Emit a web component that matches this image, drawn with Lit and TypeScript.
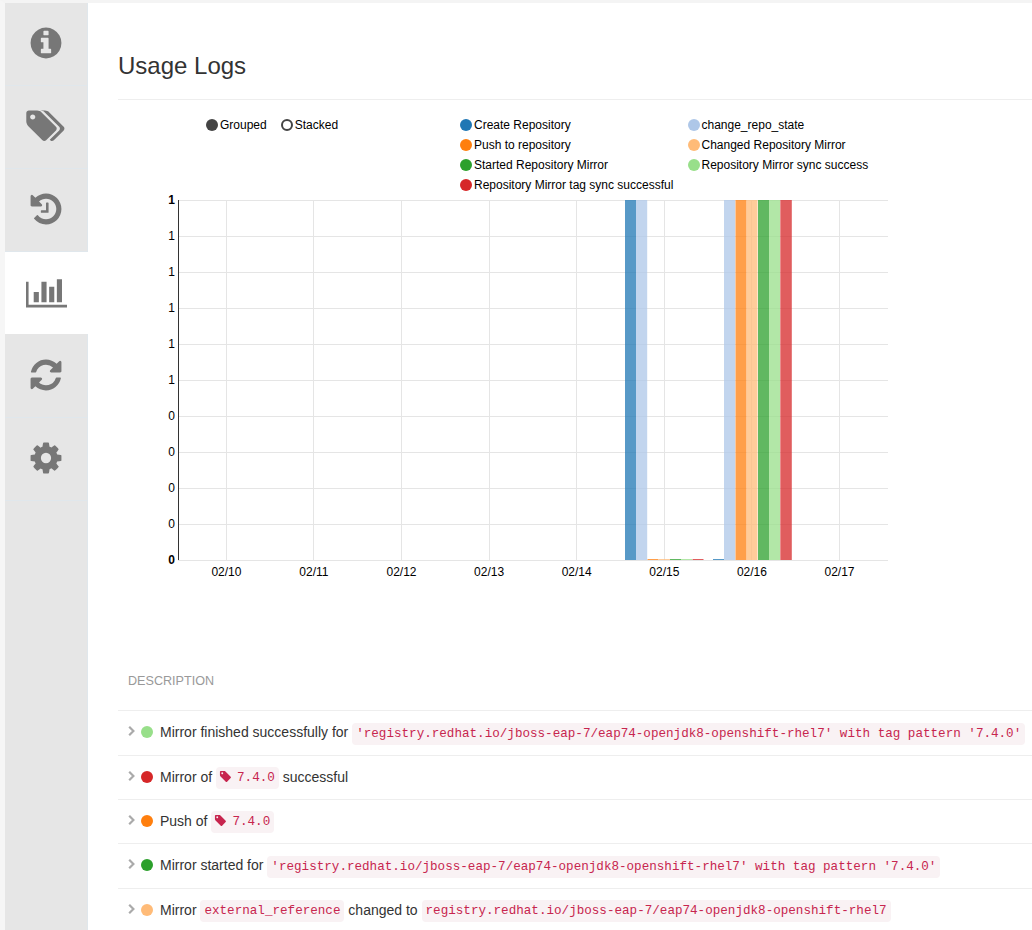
import { LitElement, css, html, svg } from 'lit'
import { customElement } from 'lit/decorators.js'

const ICONS: Record<string, { w: number; d: string }> = {
  info: {
    w: 1792,
    d: 'M1152 1376v-160q0-14-9-23t-23-9h-96v-512q0-14-9-23t-23-9h-320q-14 0-23 9t-9 23v160q0 14 9 23t23 9h96v320h-96q-14 0-23 9t-9 23v160q0 14 9 23t23 9h448q14 0 23-9t9-23zm-128-896v-160q0-14-9-23t-23-9h-192q-14 0-23 9t-9 23v160q0 14 9 23t23 9h192q14 0 23-9t9-23zm640 416q0 209-103 385.5t-279.5 279.5-385.5 103-385.5-103-279.5-279.5-103-385.5 103-385.5 279.5-279.5 385.5-103 385.5 103 279.5 279.5 103 385.5z',
  },
  tags: {
    w: 2048,
    d: 'M512 448q0-53-37.5-90.5t-90.5-37.5-90.5 37.5-37.5 90.5 37.5 90.5 90.5 37.5 90.5-37.5 37.5-90.5zm1067 576q0 53-37 90l-491 492q-39 37-91 37-53 0-90-37l-715-716q-38-37-64.5-101t-26.5-117v-416q0-52 38-90t90-38h416q53 0 117 26.5t102 64.5l715 714q37 39 37 91zm384 0q0 53-37 90l-491 492q-39 37-91 37-36 0-59-14t-53-45l470-470q37-37 37-90 0-52-37-91l-715-714q-38-38-102-64.5t-117-26.5h224q53 0 117 26.5t102 64.5l715 714q37 39 37 91z',
  },
  history: {
    w: 1792,
    d: 'M1664 896q0 156-61 298t-164 245-245 164-298 61q-172 0-327-72.5t-264-204.5q-7-10-6.5-22.5t8.5-20.5l137-138q10-9 25-9 16 2 23 12 73 95 179 147t225 52q104 0 198.5-40.5t163.5-109.5 109.5-163.5 40.5-198.5-40.5-198.5-109.5-163.5-163.5-109.5-198.5-40.5q-98 0-188 35.5t-160 101.5l137 138q31 30 14 69-17 40-59 40h-448q-26 0-45-19t-19-45v-448q0-42 40-59 39-17 69 14l130 129q107-101 244.5-156.5t284.5-55.5q156 0 298 61t245 164 164 245 61 298zm-640-288v448q0 14-9 23t-23 9h-320q-14 0-23-9t-9-23v-64q0-14 9-23t23-9h224v-352q0-14 9-23t23-9h64q14 0 23 9t9 23z',
  },
  chart: {
    w: 2048,
    d: 'M640 896v512h-256v-512h256zm384-512v1024h-256v-1024h256zm1024 1152v128h-2048v-1280h128v1152h1920zm-640-896v768h-256v-768h256zm384-384v1152h-256v-1152h256z',
  },
  refresh: {
    w: 1792,
    d: 'M1639 1056q0 5-1 7-64 268-268 434.5t-478 166.5q-146 0-282.5-55t-243.5-157l-129 129q-19 19-45 19t-45-19-19-45v-448q0-26 19-45t45-19h448q26 0 45 19t19 45-19 45l-137 137q71 66 161 102t187 36q134 0 250-65t186-179q11-17 53-117 8-23 30-23h192q13 0 22.5 9.5t9.5 22.5zm25-800v448q0 26-19 45t-45 19h-448q-26 0-45-19t-19-45 19-45l138-138q-148-137-349-137-134 0-250 65t-186 179q-11 17-53 117-8 23-30 23h-199q-13 0-22.5-9.5t-9.5-22.5v-7q65-268 270-434.5t480-166.5q146 0 284 55.5t245 156.5l130-129q19-19 45-19t45 19 19 45z',
  },
  cog: {
    w: 1792,
    d: 'M1152 896q0-106-75-181t-181-75-181 75-75 181 75 181 181 75 181-75 75-181zm512-109v222q0 12-8 23t-20 13l-185 28q-19 54-39 91 35 50 107 138 10 12 10 25t-9 23q-27 37-99 108t-94 71q-12 0-26-9l-138-108q-44 23-91 38-16 136-29 186-7 28-36 28h-222q-14 0-24.5-8.5t-11.5-21.5l-28-184q-49-16-90-37l-141 107q-10 9-25 9-14 0-25-11-126-114-165-168-7-10-7-23 0-12 8-23 15-21 51-66.5t54-70.5q-27-50-41-99l-183-27q-13-2-21-12.5t-8-23.5v-222q0-12 8-23t19-13l186-28q14-46 39-92-40-57-107-138-10-12-10-24 0-10 9-23 26-36 98.5-107.5t94.5-71.5q13 0 26 10l138 107q44-23 91-38 16-136 29-186 7-28 36-28h222q14 0 24.5 8.5t11.5 21.5l28 184q49 16 90 37l142-107q9-9 24-9 13 0 25 10 129 119 165 170 7 8 7 22 0 12-8 23-15 21-51 66.5t-54 70.5q26 50 41 98l183 28q13 2 21 12.5t8 23.5z',
  },
}

const TAG =
  'M576 448q0-53-37.5-90.5t-90.5-37.5-90.5 37.5-37.5 90.5 37.5 90.5 90.5 37.5 90.5-37.5 37.5-90.5zm1067 576q0 53-37 90l-491 492q-39 37-91 37-53 0-90-37l-715-716q-38-37-64.5-101t-26.5-117v-416q0-52 38-90t90-38h416q53 0 117 26.5t102 64.5l715 714q37 39 37 91z'

const C = {
  create: '#1f77b4',
  state: '#aec7e8',
  push: '#ff7f0e',
  changed: '#ffbb78',
  started: '#2ca02c',
  sync: '#98df8a',
  tag: '#d62728',
}

const LEGEND = [
  ['Create Repository', C.create],
  ['change_repo_state', C.state],
  ['Push to repository', C.push],
  ['Changed Repository Mirror', C.changed],
  ['Started Repository Mirror', C.started],
  ['Repository Mirror sync success', C.sync],
  ['Repository Mirror tag sync successful', C.tag],
]

const YS = [200, 236, 272, 308, 344, 380, 416, 452, 488, 524, 560]
const YL = ['1', '1', '1', '1', '1', '1', '0', '0', '0', '0', '0']
const XS: [number, string][] = [
  [226.4, '02/10'],
  [313.9, '02/11'],
  [401.5, '02/12'],
  [489.1, '02/13'],
  [576.7, '02/14'],
  [664.3, '02/15'],
  [751.9, '02/16'],
  [839.5, '02/17'],
]

// x, width, colour, top of bar
const BARS: [number, number, string, number][] = [
  [625, 11, C.create, 200],
  [636, 11.2, C.state, 200],
  [647.5, 11, C.push, 559],
  [659, 11, C.changed, 559],
  [670, 11, C.started, 559],
  [681, 11, C.sync, 559],
  [692.5, 11, C.tag, 559],
  [713, 11, C.create, 559],
  [724, 11.2, C.state, 200],
  [735.5, 11, C.push, 200],
  [746.5, 11, C.changed, 200],
  [758, 11, C.started, 200],
  [769, 11, C.sync, 200],
  [780.3, 11.5, C.tag, 200],
]

const ROPE = "'registry.redhat.io/jboss-eap-7/eap74-openjdk8-openshift-rhel7' with tag pattern '7.4.0'"

@customElement('app-root')
export class AppRoot extends LitElement {
  static styles = css`
    :host {
      display: block;
      width: 1032px;
      height: 930px;
      overflow: hidden;
      background: #fff;
      font-family: 'Liberation Sans', Arial, sans-serif;
      font-size: 14px;
      color: #333;
    }
    .page {
      display: flex;
      height: 927px;
      border-top: 3px solid #f4f4f4;
      border-left: 5px solid #f6f6f6;
    }
    .tabs {
      flex: none;
      width: 83px;
      background: #e6e6e6;
      display: flex;
      flex-direction: column;
      border-right: 1px solid #e0e7ec;
      box-sizing: border-box;
    }
    .tab {
      flex: none;
      height: 83px;
      box-sizing: border-box;
      border-bottom: 1px solid #e0e7ec;
      display: flex;
      align-items: center;
      justify-content: center;
      padding-bottom: 3px;
    }
    .tab svg {
      height: 36px;
      fill: #777;
      display: block;
    }
    .tab.active {
      height: 82px;
      background: #fff;
      margin-right: -1px;
      border-bottom: none;
      padding-bottom: 2px;
    }
    .tab.active + .tab {
      height: 84px;
      padding-top: 2px;
    }
    .main {
      flex: 1;
      min-width: 0;
      padding-left: 30px;
    }
    h1 {
      margin: 0;
      height: 97px;
      box-sizing: border-box;
      padding-top: 47px;
      font-size: 24px;
      line-height: 32px;
      font-weight: 400;
      color: #333;
      border-bottom: 1px solid #eee;
    }
    .chart {
      position: relative;
      height: 543px;
      font-size: 12px;
      color: #000;
    }
    .chart svg {
      position: absolute;
      left: 0;
      top: 0;
    }
    .chart svg text {
      font-family: 'Liberation Sans', Arial, sans-serif;
      font-size: 12px;
      fill: #000;
    }
    .controls {
      position: absolute;
      left: 88px;
      top: 15px;
      display: flex;
      gap: 14px;
    }
    .legend {
      position: absolute;
      left: 342px;
      top: 15px;
      display: grid;
      grid-template-columns: 227.5px 1fr;
      grid-auto-rows: 20px;
      width: 430px;
    }
    .key {
      display: flex;
      align-items: center;
      gap: 2px;
      height: 20px;
      white-space: nowrap;
    }
    .dot {
      flex: none;
      width: 12px;
      height: 12px;
      border-radius: 50%;
      box-sizing: border-box;
    }
    .dot.on {
      background: #444;
    }
    .dot.off {
      border: 2px solid #444;
    }
    .head {
      height: 67.2px;
      box-sizing: border-box;
      padding: 30px 0 0 10px;
      font-size: 12.6px;
      line-height: 17px;
      color: #999;
    }
    .row {
      height: 44.4px;
      box-sizing: border-box;
      border-top: 1px solid #eee;
      padding-left: 10px;
      display: flex;
      align-items: flex-start;
      padding-top: 11px;
      line-height: 20px;
      white-space: nowrap;
    }
    .chev {
      flex: none;
      width: 7px;
      height: 10px;
      margin-top: 4px;
      margin-right: -1px;
      fill: none;
      stroke: #aaa;
      stroke-width: 2.2;
    }
    .row .dot {
      margin: 4px 7px 0 7px;
    }
    code {
      font-family: 'Liberation Mono', monospace;
      font-size: 12.6px;
      line-height: 14px;
      padding: 4px;
      color: #c7254e;
      background: #f9f2f4;
      border-radius: 4px;
    }
    .row.tight code {
      vertical-align: 1px;
    }
    code svg {
      width: 13px;
      height: 13px;
      fill: #c7254e;
      vertical-align: -2px;
      margin: 0 -2.5px 0 -1px;
    }
  `

  private tagChip() {
    return html`<code
      ><svg viewBox="0 0 1792 1792"><path d=${TAG}></path></svg> 7.4.0</code
    >`
  }

  private row(color: string, body: unknown, tight = false) {
    return html`<div class="row ${tight ? 'tight' : ''}">
      <svg class="chev" viewBox="0 0 7 10"><path d="M1.2 .8l4.2 4.2-4.2 4.2"></path></svg>
      <span class="dot" style="background:${color}"></span>
      <span>${body}</span>
    </div>`
  }

  private chart() {
    return html`<svg width="914" height="543" viewBox="118 100 914 543">
      ${YS.map((y) => svg`<line x1="178" x2="888" y1=${y + 0.5} y2=${y + 0.5} stroke="#e5e5e5"></line>`)}
      ${XS.map(([x]) => {
        const px = Math.floor(x) + 0.5
        return svg`<line x1=${px} x2=${px} y1="200" y2="560" stroke="#e5e5e5"></line>`
      })}
      <line x1="178.5" x2="178.5" y1="200" y2="560" stroke="#333"></line>
      ${BARS.map(
        ([x, w, c, top]) =>
          svg`<rect x=${x} y=${top} width=${w} height=${560 - top} fill=${c} fill-opacity="0.75"></rect>`,
      )}
      ${YS.map(
        (y, i) =>
          svg`<text x="175" y=${y + 4} text-anchor="end" font-weight=${i === 0 || i === 10 ? 700 : 400}
            >${YL[i]}</text>`,
      )}
      ${XS.map(([x, t]) => svg`<text x=${x} y="576" text-anchor="middle">${t}</text>`)}
    </svg>`
  }

  render() {
    const tabs = ['info', 'tags', 'history', 'chart', 'refresh', 'cog']
    return html`<div class="page">
      <nav class="tabs">
        ${tabs.map(
          (t) => html`<div class="tab ${t === 'chart' ? 'active' : ''}">
            <svg viewBox="0 0 ${ICONS[t].w} 1792" style="width:${(ICONS[t].w * 36) / 1792}px">
              <path d=${ICONS[t].d}></path>
            </svg>
          </div>`,
        )}
      </nav>
      <main class="main">
        <h1>Usage Logs</h1>
        <div class="chart">
          ${this.chart()}
          <div class="controls">
            <div class="key"><span class="dot on"></span>Grouped</div>
            <div class="key"><span class="dot off"></span>Stacked</div>
          </div>
          <div class="legend">
            ${LEGEND.map(
              ([name, c]) =>
                html`<div class="key"><span class="dot" style="background:${c}"></span>${name}</div>`,
            )}
          </div>
        </div>
        <div class="head">DESCRIPTION</div>
        ${this.row(C.sync, html`Mirror finished successfully for <code>${ROPE}</code>`)}
        ${this.row(C.tag, html`Mirror of ${this.tagChip()} successful`, true)}
        ${this.row(C.push, html`Push of ${this.tagChip()}`, true)}
        ${this.row(C.started, html`Mirror started for <code>${ROPE}</code>`)}
        ${this.row(
          C.changed,
          html`Mirror <code>external_reference</code> changed to
            <code>registry.redhat.io/jboss-eap-7/eap74-openjdk8-openshift-rhel7</code>`,
          true,
        )}
      </main>
    </div>`
  }
}
